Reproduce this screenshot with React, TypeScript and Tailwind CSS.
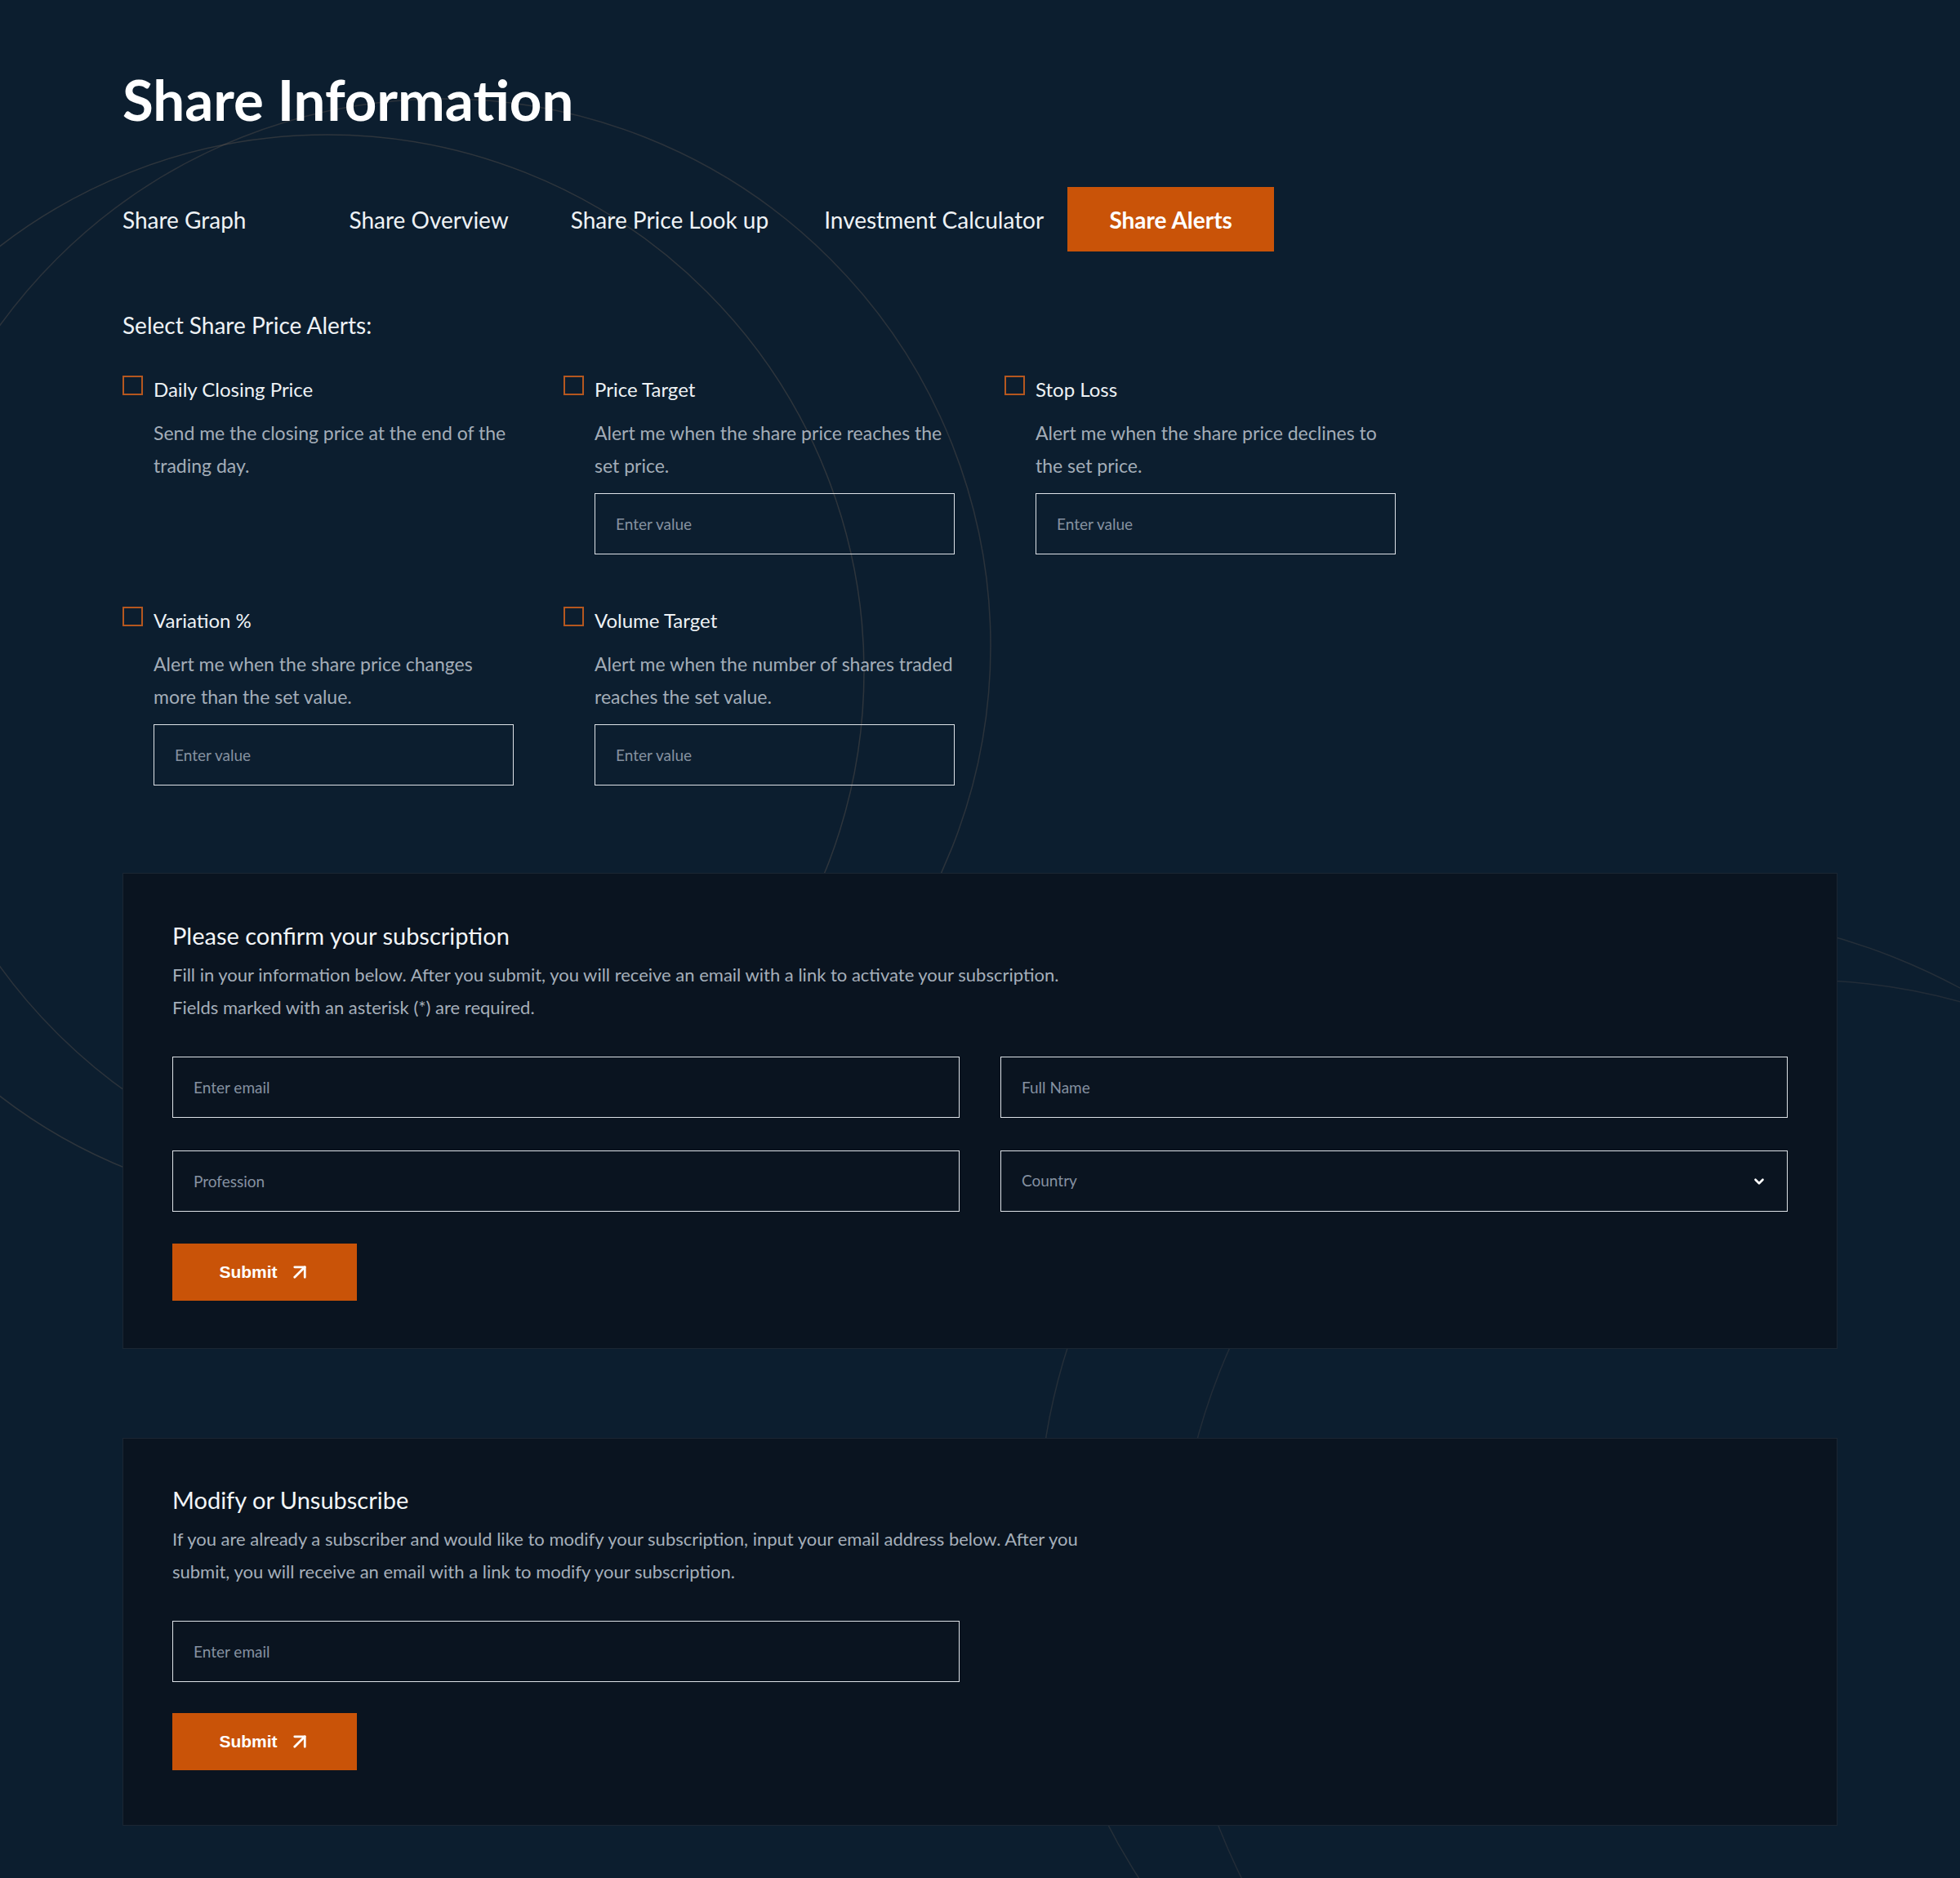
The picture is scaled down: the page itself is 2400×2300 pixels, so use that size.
import React from "react";
import { ArrowUpRight, ChevronDown } from "lucide-react";

type Alert = {
  label: string;
  lines: string[];
  input: boolean;
};

const alerts: Alert[] = [
  { label: "Daily Closing Price", lines: ["Send me the closing price at the end of the", "trading day."], input: false },
  { label: "Price Target", lines: ["Alert me when the share price reaches the", "set price."], input: true },
  { label: "Stop Loss", lines: ["Alert me when the share price declines to", "the set price."], input: true },
  { label: "Variation %", lines: ["Alert me when the share price changes", "more than the set value."], input: true },
  { label: "Volume Target", lines: ["Alert me when the number of shares traded", "reaches the set value."], input: true },
];

function AlertItem({ a }: { a: Alert }) {
  return (
    <div>
      <div className="flex items-start gap-[13px]">
        <span className="block h-[24px] w-[25px] shrink-0 border-[2.5px] border-[#b5571f]" />
        <span className="mt-[5px] text-[24px] leading-none text-[#eef2f5]">{a.label}</span>
      </div>
      <div className="mt-[21px] pl-[38px] text-[23px] leading-[40px] text-[#a3adb8]">
        {a.lines.map((l) => (
          <span key={l} className="block whitespace-nowrap">
            {l}
          </span>
        ))}
      </div>
      {a.input && (
        <input
          className="ml-[38px] mt-[14px] block h-[75px] w-[441px] border-[1.5px] border-[#dde2e7] bg-transparent px-[25px] text-[19px] text-white outline-none placeholder:text-[#8591a0]"
          placeholder="Enter value"
        />
      )}
    </div>
  );
}

function Field({ placeholder }: { placeholder: string }) {
  return (
    <input
      className="block h-[75px] w-full border-[1.5px] border-[#dde2e7] bg-transparent px-[25px] text-[19px] text-white outline-none placeholder:text-[#8591a0]"
      placeholder={placeholder}
    />
  );
}

function SubmitButton() {
  return (
    <button className="flex h-[70px] w-[226px] items-center justify-center gap-[12px] bg-[#c95308] pl-[2px] font-['Liberation_Sans',Arial,sans-serif] text-[21px] font-bold text-white">
      <span>Submit</span>
      <ArrowUpRight size={30} strokeWidth={2.2} />
    </button>
  );
}

export default function App() {
  return (
    <div className="relative min-h-[2300px] w-full overflow-hidden bg-[#0c1e2f] font-['Lato',sans-serif]">
      <svg
        className="pointer-events-none absolute left-0 top-0"
        width="2400"
        height="2300"
        viewBox="0 0 2400 2300"
        fill="none"
      >
        <circle cx="401" cy="822" r="657" stroke="rgba(170,135,110,0.22)" strokeWidth="1.5" />
        <circle cx="543" cy="791" r="670" stroke="rgba(170,135,110,0.2)" strokeWidth="1.5" />
        <circle cx="2036" cy="1883" r="765" stroke="rgba(170,135,110,0.16)" strokeWidth="1.5" />
        <circle cx="2200" cy="1960" r="760" stroke="rgba(170,135,110,0.14)" strokeWidth="1.5" />
      </svg>

      <div className="relative px-[150px] pb-[64px] pt-[87px]">
        <h1 className="text-[69px] font-bold leading-none text-white">Share Information</h1>

        <nav className="mt-[73px] flex h-[79px] items-center">
          <span className="flex h-[79px] items-center pr-[126px] text-[28px] text-[#eef2f5]">Share Graph</span>
          <span className="flex h-[79px] items-center pr-[76px] text-[28px] text-[#eef2f5]">Share Overview</span>
          <span className="flex h-[79px] items-center pr-[68px] text-[28px] text-[#eef2f5]">Share Price Look up</span>
          <span className="flex h-[79px] items-center pr-[29px] text-[28px] text-[#eef2f5]">Investment Calculator</span>
          <span className="flex h-[79px] w-[253px] items-center justify-center bg-[#c95308] text-[28px] font-bold text-white">
            Share Alerts
          </span>
        </nav>

        <h2 className="mt-[76px] text-[28px] leading-none text-[#eef2f5]">Select Share Price Alerts:</h2>

        <div className="mt-[48px] grid grid-cols-[540px_540px_540px] gap-y-[64px]">
          {alerts.map((a) => (
            <AlertItem key={a.label} a={a} />
          ))}
        </div>

        <section className="mt-[107px] border border-[#1b2633] bg-[#0a1420] px-[60px] pb-[58px] pt-[61px]">
          <h3 className="text-[29px] leading-none text-[#f2f5f7]">Please confirm your subscription</h3>
          <div className="mt-[14px] text-[22px] leading-[40px] text-[#a5afba]">
            <p className="whitespace-nowrap">
              Fill in your information below. After you submit, you will receive an email with a link to activate your subscription.
            </p>
            <p className="whitespace-nowrap">Fields marked with an asterisk (*) are required.</p>
          </div>
          <div className="mt-[40px] grid grid-cols-2 gap-x-[50px] gap-y-[40px]">
            <Field placeholder="Enter email" />
            <Field placeholder="Full Name" />
            <Field placeholder="Profession" />
            <div className="flex h-[75px] w-full items-center justify-between border-[1.5px] border-[#dde2e7] px-[25px] text-[19px] text-[#8591a0]">
              <span>Country</span>
              <ChevronDown size={18} strokeWidth={3.5} className="text-white" />
            </div>
          </div>
          <div className="mt-[39px]">
            <SubmitButton />
          </div>
        </section>

        <section className="mt-[109px] border border-[#1b2633] bg-[#0a1420] px-[60px] pb-[67px] pt-[60px]">
          <h3 className="text-[29px] leading-none text-[#f2f5f7]">Modify or Unsubscribe</h3>
          <div className="mt-[14px] text-[22px] leading-[40px] text-[#a5afba]">
            <p className="whitespace-nowrap">
              If you are already a subscriber and would like to modify your subscription, input your email address below. After you
            </p>
            <p className="whitespace-nowrap">submit, you will receive an email with a link to modify your subscription.</p>
          </div>
          <div className="mt-[40px] grid grid-cols-2 gap-x-[50px]">
            <Field placeholder="Enter email" />
          </div>
          <div className="mt-[38px]">
            <SubmitButton />
          </div>
        </section>
      </div>
    </div>
  );
}
